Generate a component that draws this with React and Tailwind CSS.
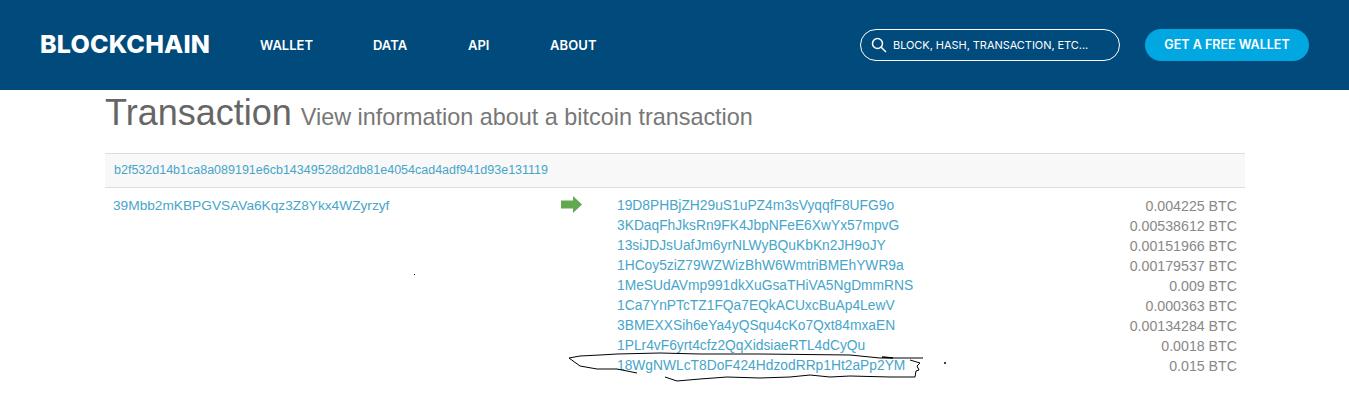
const outputs = [
  ['19D8PHBjZH29uS1uPZ4m3sVyqqfF8UFG9o', '0.004225 BTC'],
  ['3KDaqFhJksRn9FK4JbpNFeE6XwYx57mpvG', '0.00538612 BTC'],
  ['13siJDJsUafJm6yrNLWyBQuKbKn2JH9oJY', '0.00151966 BTC'],
  ['1HCoy5ziZ79WZWizBhW6WmtriBMEhYWR9a', '0.00179537 BTC'],
  ['1MeSUdAVmp991dkXuGsaTHiVA5NgDmmRNS', '0.009 BTC'],
  ['1Ca7YnPTcTZ1FQa7EQkACUxcBuAp4LewV', '0.000363 BTC'],
  ['3BMEXXSih6eYa4yQSqu4cKo7Qxt84mxaEN', '0.00134284 BTC'],
  ['1PLr4vF6yrt4cfz2QqXidsiaeRTL4dCyQu', '0.0018 BTC'],
  ['18WgNWLcT8DoF424HdzodRRp1Ht2aPp2YM', '0.015 BTC'],
]

function Header() {
  return (
    <header className="flex h-[90px] items-center justify-between bg-[#004a7c] pl-10 pr-10 font-['Inter',sans-serif] text-white">
      <div className="flex items-center">
        <span className="w-[220px] text-[25px] font-extrabold tracking-[0.2px]">BLOCKCHAIN</span>
        <nav className="flex pt-[2px] text-[13px] font-semibold">
          <a className="w-[113px]">WALLET</a>
          <a className="w-[95px]">DATA</a>
          <a className="w-[82px]">API</a>
          <a className="tracking-[0.1px]">ABOUT</a>
        </nav>
      </div>
      <div className="flex items-center gap-[25px]">
        <div className="flex h-8 w-[260px] items-center gap-[6px] rounded-full border border-white pl-[10px] text-[11px]">
          <svg width="16" height="16" viewBox="0 0 16 16" fill="none" stroke="currentColor" strokeWidth="1.5">
            <circle cx="6.5" cy="6.5" r="5" />
            <path d="M10.2 10.2L15 15" />
          </svg>
          <span className="tracking-[-0.05px]">BLOCK, HASH, TRANSACTION, ETC...</span>
        </div>
        <button className="h-8 w-[164px] rounded-full bg-[#00a7e1] pt-[1px] text-[12.5px] font-semibold">GET A FREE WALLET</button>
      </div>
    </header>
  )
}

export default function App() {
  return (
    <div className="relative h-[401px] overflow-hidden bg-white font-['Liberation_Sans',sans-serif]">
      <Header />
      <main className="ml-[105px] w-[1140px]">
        <h1 className="mt-[3px] flex h-[60px] items-baseline gap-[9px] text-[36px] leading-[40px] text-[#666]">
          Transaction
          <small className="text-[23.4px] text-[#777]">View information about a bitcoin transaction</small>
        </h1>
        <div className="flex h-[35px] items-center border-y border-[#ddd] bg-[#f8f8f8] pl-[9px] text-[12.5px] text-[#47a5c9]">
          b2f532d14b1ca8a089191e6cb14349528d2db81e4054cad4adf941d93e131119
        </div>
        <div className="flex pt-2 leading-5">
          <a className="w-[447px] pl-[8px] text-[13.7px] text-[#47a5c9]">39Mbb2mKBPGVSAVa6Kqz3Z8Ykx4WZyrzyf</a>
          <div className="w-[65px]">
            <svg width="21" height="17" viewBox="0 0 21 17" className="ml-[9px]">
              <path d="M0 4.5H12V0L21 8.5L12 17V12.5H0Z" fill="#62a850" />
            </svg>
          </div>
          <ul className="flex-1 pr-2">
            {outputs.map(([address, amount]) => (
              <li key={address} className="flex justify-between">
                <a className="text-[13.8px] text-[#47a5c9]">{address}</a>
                <span className="text-[14.2px] text-[#888]">{amount}</span>
              </li>
            ))}
          </ul>
        </div>
      </main>
      {/* hand drawn scribble over the last address */}
      <svg width="400" height="40" viewBox="560 350 400 40" className="absolute left-[560px] top-[350px]" fill="none" stroke="#000" strokeWidth="1">
        <path d="M637 373L617 369L597 369L580 366L569 358L580 356L600 355L617 354L660 353L700 354L760 354L850 355L880 358L923 358" />
        <path d="M882 357L893 358" strokeWidth="1.6" />
        <path d="M910 360L920 363L917 366L919 370L916 371L915 377L890 377L850 376L830 377L810 375L790 377L760 378L727 377L700 379L677 381L665 377" />
        <circle cx="945" cy="363" r="1" fill="#000" stroke="none" />
      </svg>
      <div className="absolute left-[414px] top-[274px] size-px bg-black" />
    </div>
  )
}
